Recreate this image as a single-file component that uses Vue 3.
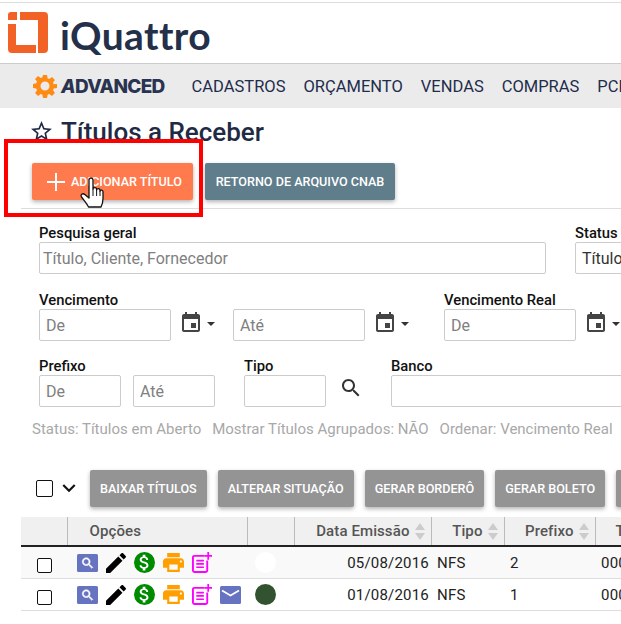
<script setup>
const nav = ["CADASTROS", "ORÇAMENTO", "VENDAS", "COMPRAS", "PCP"]
const rows = [
  { date: "05/08/2016", tipo: "NFS", prefixo: "2", mail: false, color: "#ffffff" },
  { date: "01/08/2016", tipo: "NFS", prefixo: "1", mail: true, color: "#33522f" }
]
const actions = ["Baixar Títulos", "Alterar Situação", "Gerar Borderô", "Gerar Boleto"]
const calendar = "M17 12h-5v5h5v-5zM16 1v2H8V1H6v2H5c-1.11 0-1.99.9-1.99 2L3 19c0 1.1.89 2 2 2h14c1.1 0 2-.9 2-2V5c0-1.1-.9-2-2-2h-1V1h-2zm3 18H5V8h14v11z"
const search = "M15.5 14h-.79l-.28-.27C15.41 12.59 16 11.11 16 9.5 16 5.91 13.09 3 9.5 3S3 5.91 3 9.5 5.91 16 9.5 16c1.61 0 3.09-.59 4.23-1.57l.27.28v.79l5 4.99L20.49 19l-4.99-5zm-6 0C7.01 14 5 11.99 5 9.5S7.01 5 9.5 5 14 7.01 14 9.5 11.99 14 9.5 14z"
</script>

<template>
  <div class="page">
    <header class="top">
      <svg class="mark" width="40" height="41" viewBox="0 0 40 41">
        <path fill="#f26125" d="M3 0h6v8H0V3a3 3 0 0 1 3-3zM12 0h24a4 4 0 0 1 4 4v33a4 4 0 0 1-4 4h-6V8H12zM0 12h8v21h20v8H4a4 4 0 0 1-4-4z" />
      </svg>
      <span class="brand">iQuattro</span>
    </header>

    <nav class="nav">
      <svg class="gear" width="24" height="24" viewBox="0 0 24 24">
        <path fill="#ff8a14" fill-rule="evenodd" d="M10 1h4l.6 3.2 1.7.7L19 3l2.9 2.9-1.9 2.7.7 1.700L24 10v4l-3.300.6-.7 1.700 1.900 2.700L19 21.900l-2.700-1.900-1.700.7L14 24h-4l-.6-3.300-1.700-.7L5 21.900 2.100 19l1.900-2.700-.7-1.700L0 14v-4l3.300-.7.7-1.700L2.100 5 5 2.100l2.700 1.900 1.700-.7zM12 7.500a4.500 4.500 0 1 0 0 9 4.500 4.500 0 0 0 0-9z" />
      </svg>
      <span class="advanced"><em>A</em>DVANCED</span>
      <a v-for="n in nav" :key="n" class="nav-item">{{ n }}</a>
    </nav>

    <h1 class="title">
      <svg width="25" height="25" viewBox="0 0 24 24">
        <path fill="#1f2a44" d="M22 9.240l-7.190-.62L12 2 9.190 8.630 2 9.240l5.460 4.730L5.820 21 12 17.270 18.180 21l-1.630-7.030L22 9.240zM12 15.400l-3.760 2.270 1-4.280-3.320-2.880 4.380-.38L12 6.100l1.710 4.040 4.380.38-3.320 2.880 1 4.280L12 15.400z" />
      </svg>
      Títulos a Receber
    </h1>

    <div class="toolbar">
      <button class="btn orange">
        <svg width="18" height="18" viewBox="0 0 18 18"><path fill="#fff" d="M8 0h2v8h8v2h-8v8H8v-8H0V8h8z" /></svg>
        Adicionar Título
      </button>
      <button class="btn slate">Retorno de Arquivo CNAB</button>
    </div>

    <section class="filters">
      <div class="row row-1">
        <label class="field w507 wide"><span>Pesquisa geral</span><input placeholder="Título, Cliente, Fornecedor"></label>
        <label class="field w200"><span>Status</span><input value="Títulos em Aberto"></label>
      </div>

      <div class="row row-2">
        <label class="field w132"><span>Vencimento</span><input placeholder="De"></label>
        <div class="picker">
          <svg width="24" height="24" viewBox="0 0 24 24"><path fill="#444" :d="calendar" /></svg>
          <i class="caret"></i>
        </div>
        <label class="field w132"><span>&nbsp;</span><input placeholder="Até"></label>
        <div class="picker">
          <svg width="24" height="24" viewBox="0 0 24 24"><path fill="#444" :d="calendar" /></svg>
          <i class="caret"></i>
        </div>
        <label class="field w132 real"><span>Vencimento Real</span><input placeholder="De"></label>
        <div class="picker">
          <svg width="24" height="24" viewBox="0 0 24 24"><path fill="#444" :d="calendar" /></svg>
          <i class="caret"></i>
        </div>
      </div>

      <div class="row row-3">
        <label class="field w82"><span>Prefixo</span><input placeholder="De"></label>
        <label class="field w82 ate"><span>&nbsp;</span><input placeholder="Até"></label>
        <label class="field w82 tipo"><span>Tipo</span><input></label>
        <svg class="lookup" width="24" height="24" viewBox="0 0 24 24"><path fill="#333" :d="search" /></svg>
        <label class="field w300"><span>Banco</span><input></label>
      </div>

      <p class="summary">
        <span>Status: Títulos em Aberto</span>
        <span>Mostrar Títulos Agrupados: NÃO</span>
        <span>Ordenar: Vencimento Real</span>
      </p>
    </section>

    <div class="bulk">
      <i class="check big"></i>
      <svg class="chev" width="26" height="26" viewBox="0 0 24 24"><path fill="#111" d="M16.590 8.590L12 13.170 7.410 8.590 6 10l6 6 6-6z" /></svg>
      <button v-for="a in actions" :key="a" class="btn gray">{{ a }}</button>
      <button class="btn gray more"></button>
    </div>

    <table class="grid">
      <colgroup>
        <col style="width: 46px"><col style="width: 180px"><col style="width: 47px"><col style="width: 137px">
        <col style="width: 73px"><col style="width: 91px"><col style="width: 120px">
      </colgroup>
      <thead>
        <tr>
          <th></th>
          <th class="opt">Opções</th>
          <th></th>
          <th class="sortable">Data Emissão<i class="sort"></i></th>
          <th class="sortable">Tipo<i class="sort"></i></th>
          <th class="sortable">Prefixo<i class="sort"></i></th>
          <th class="last">Título</th>
        </tr>
      </thead>
      <tbody>
        <tr v-for="r in rows" :key="r.date">
          <td class="mid"><i class="check"></i></td>
          <td>
            <div class="tools">
              <svg width="21" height="18" viewBox="0 0 21 18">
                <rect width="21" height="18" rx="1.500" fill="#6573c0" />
                <g transform="translate(3.500 2) scale(.6)"><path fill="#fff" stroke="#fff" stroke-width="1" :d="search" /></g>
              </svg>
              <svg width="20" height="20" viewBox="3 3 18 18"><path fill="#000" d="M3 17.250V21h3.750L17.810 9.940l-3.750-3.750L3 17.250zM20.710 7.040c.39-.39.39-1.020 0-1.410l-2.340-2.340c-.39-.39-1.020-.39-1.410 0l-1.830 1.830 3.750 3.750 1.830-1.830z" /></svg>
              <svg width="21" height="21" viewBox="0 0 24 24">
                <circle cx="12" cy="12" r="12" fill="#008a00" />
                <path fill="#fff" d="M11.800 10.900c-2.270-.59-3-1.200-3-2.150 0-1.090 1.010-1.850 2.700-1.850 1.780 0 2.440.85 2.500 2.100h2.210c-.07-1.720-1.120-3.300-3.210-3.810V3h-3v2.160c-1.940.42-3.500 1.680-3.500 3.610 0 2.310 1.910 3.460 4.700 4.130 2.500.6 3 1.480 3 2.410 0 .69-.49 1.790-2.700 1.790-2.060 0-2.870-.92-2.980-2.100h-2.200c.12 2.190 1.760 3.420 3.680 3.830V21h3v-2.150c1.950-.37 3.500-1.500 3.500-3.550 0-2.840-2.430-3.810-4.700-4.400z" />
              </svg>
              <svg width="21" height="19" viewBox="2 3 20 18"><path fill="#ffa000" d="M19 8H5c-1.660 0-3 1.340-3 3v6h4v4h12v-4h4v-6c0-1.660-1.340-3-3-3zm-3 11H8v-5h8v5zm3-7c-.55 0-1-.45-1-1s.45-1 1-1 1 .45 1 1-.45 1-1 1zm-1-9H6v4h12V3z" /></svg>
              <svg width="20" height="21" viewBox="0 0 21 22">
                <path fill="none" stroke="#f0f" stroke-width="2" d="M13 4H2.500a1.500 1.500 0 0 0-1.500 1.500v14A1.500 1.500 0 0 0 2.500 21h12a1.500 1.500 0 0 0 1.500-1.500V9" />
                <path fill="none" stroke="#f0f" stroke-width="1.800" d="M4.500 9h8M4.500 12.500h8M4.500 16h8M17 0v8M13 4h8" />
              </svg>
              <svg v-if="r.mail" width="21" height="18" viewBox="0 0 21 18">
                <rect width="21" height="18" rx="1.500" fill="#6573c0" />
                <path fill="none" stroke="#fff" stroke-width="1.800" d="M2 4.500l8.500 5 8.500-5" />
              </svg>
            </div>
          </td>
          <td class="mid"><i class="dot" :style="{ background: r.color }"></i></td>
          <td class="date">{{ r.date }}</td>
          <td class="txt">{{ r.tipo }}</td>
          <td class="txt">{{ r.prefixo }}</td>
          <td class="txt">000123</td>
        </tr>
      </tbody>
    </table>

    <div class="highlight"></div>
    <svg class="hand" width="24" height="33" viewBox="0 0 24 33">
      <path fill="#fff" stroke="#111" stroke-width="1.300" stroke-linejoin="round" d="M9 3c0-2.600 4-2.600 4 0v9c0-1.900 3.600-1.900 3.600 0v1c0-1.800 3.400-1.800 3.400.2v1c0-1.500 3-1.300 3 .6v6.700c0 3.500-.6 5.500-2 8.500H8.500C7 27 4 23.500 1.500 20c-1.500-2.300 1.200-4.300 3.300-2.500L9 21z" />
      <path fill="none" stroke="#111" stroke-width="1" d="M13 12v7M16.600 13v6M20 14v5" />
    </svg>
  </div>
</template>

<style scoped>
.page {
  position: relative;
  width: 621px;
  height: 624px;
  overflow: hidden;
  background: #fff;
  font-family: Roboto, "Liberation Sans", sans-serif;
  color: #222;
}

.top {
  height: 51px;
  margin-top: 2px;
  border-top: 1px solid #ddd;
  border-bottom: 1px solid #ccc;
  display: flex;
  align-items: flex-start;
  padding: 9px 0 0 8px;
}

.brand {
  margin-left: 12px;
  margin-top: -2px;
  font-family: Lato, sans-serif;
  font-weight: 700;
  font-size: 39px;
  line-height: 50px;
  letter-spacing: .4px;
  color: #24304a;
}

.nav {
  height: 44px;
  width: 800px;
  background: #ebebeb;
  display: flex;
  align-items: center;
  padding-left: 33px;
}

.gear { flex: none; }

.advanced {
  margin-left: 4px;
  margin-right: 27px;
  font-family: Inter, sans-serif;
  font-weight: 800;
  font-size: 19px;
  letter-spacing: -.7px;
  color: #2a3350;
}

.nav-item {
  margin-right: 18px;
  font-size: 16.5px;
  color: #1f2d4d;
}

.title {
  margin: 0;
  height: 46px;
  padding: 9px 0 0 29px;
  display: flex;
  align-items: flex-start;
  gap: 7px;
  font-size: 26px;
  line-height: 30px;
  font-weight: 500;
  color: #1f2a44;
}

.title svg { margin-top: 2px; }

.toolbar {
  margin-left: 21px;
  padding: 0 0 8px 11px;
  width: 800px;
  display: flex;
  gap: 12px;
  border-bottom: 1px solid #ddd;
}

.btn {
  height: 37px;
  padding: 0 10px;
  border: none;
  border-radius: 2px;
  display: flex;
  align-items: center;
  flex: none;
  color: #fff;
  font-family: Roboto, sans-serif;
  font-weight: 500;
  font-size: 12.6px;
  white-space: nowrap;
  text-transform: uppercase;
  box-shadow: 0 2px 4px rgba(0, 0, 0, .3);
}

.orange {
  width: 161px;
  padding-left: 15px;
  gap: 6px;
  background: #ff7a4d;
}

.slate {
  width: 190px;
  justify-content: center;
  background: #607d8b;
}

.gray {
  justify-content: center;
  padding: 0 10px;
  background: #949494;
}

.more { width: 60px; }

.filters {
  padding: 15px 0 0 39px;
  width: 800px;
}

.row {
  display: flex;
  align-items: flex-start;
}

.row-1 { gap: 29px; height: 67px; }
.row-2 { height: 66px; }
.row-3 { height: 63px; }

.field {
  display: flex;
  flex-direction: column;
  flex: none;
}

.field span {
  height: 18px;
  font-size: 14.8px;
  line-height: 18px;
  font-weight: 500;
  color: #111;
}

.field input {
  width: 100%;
  height: 32px;
  box-sizing: border-box;
  padding: 0 6px;
  border: 1px solid #ccc;
  border-radius: 2px;
  background: #fff;
  font-family: Roboto, sans-serif;
  font-size: 16px;
  color: #333;
  outline: none;
}

.field input::placeholder {
  color: #808080;
  opacity: 1;
}

.field.wide input { padding-left: 3px; }

.w507 { width: 507px; }
.w200 { width: 200px; }
.w132 { width: 132px; }
.w82 { width: 82px; }
.w300 { width: 300px; }
.real { margin-left: 17px; }
.ate { margin-left: 12px; }
.tipo { margin-left: 29px; }

.picker {
  width: 62px;
  height: 24px;
  box-sizing: border-box;
  margin-top: 20px;
  padding-left: 8px;
  display: flex;
  align-items: center;
  gap: 4px;
  flex: none;
}

.caret {
  width: 0;
  height: 0;
  margin-top: 1px;
  border: 4.5px solid transparent;
  border-top-color: #333;
  border-bottom: none;
}

.lookup {
  margin: 19px 28px 0 13px;
  flex: none;
}

.summary {
  margin: 0 0 0 -7px;
  display: flex;
  gap: 11px;
  font-size: 15px;
  line-height: 18px;
  color: #a8a8a8;
}

.bulk {
  margin-top: 32px;
  padding-left: 36px;
  width: 800px;
  height: 47px;
  display: flex;
  align-items: flex-start;
  gap: 11px;
}

.check {
  display: block;
  width: 13px;
  height: 13px;
  border: 1px solid #111;
  border-radius: 2px;
  background: #fff;
  margin: 6px auto 0;
}

.check.big {
  width: 15px;
  height: 15px;
  margin: 10px 0 0;
  flex: none;
}

.chev { margin: 5px -2.500px 0 -8.500px; flex: none; }

.grid {
  margin-left: 21px;
  width: 694px;
  table-layout: fixed;
  border-collapse: collapse;
}

.grid th {
  height: 28px;
  padding: 0;
  background: #f0f0f0;
  border-bottom: 2px solid #222;
  border-right: 1px solid #bbb;
  font-size: 15px;
  font-weight: 500;
  color: #555;
  letter-spacing: .1px;
}

.grid th.sortable {
  text-align: right;
  padding-right: 5px;
}

.grid th.last {
  border-right: none;
  text-align: left;
  padding-left: 20px;
}

.grid th.opt {
  text-align: left;
  padding-left: 22px;
}

.sort {
  display: inline-block;
  position: relative;
  width: 11px;
  height: 15px;
  margin-left: 5px;
  vertical-align: -3px;
}

.sort::before,
.sort::after {
  content: "";
  position: absolute;
  left: 0;
  border: 5.5px solid transparent;
}

.sort::before {
  top: -1px;
  border-top: none;
  border-bottom: 7px solid #ccc;
}

.sort::after {
  bottom: -1px;
  border-bottom: none;
  border-top: 7px solid #ccc;
}

.grid td {
  height: 31px;
  padding: 0;
  border-bottom: 1px solid #ddd;
  font-size: 15px;
  letter-spacing: .2px;
  color: #222;
}

.grid tbody tr:first-child td { background: #f9f9f9; }

.grid td.mid { text-align: center; }

.grid td.date {
  text-align: right;
  padding-right: 2px;
}

.grid td.txt { padding-left: 6px; }

.tools {
  display: flex;
  align-items: center;
  gap: 8px;
  padding-left: 10px;
  height: 31px;
}

.tools svg { flex: none; }

.dot {
  display: block;
  width: 21px;
  height: 21px;
  border-radius: 50%;
  margin-left: 8px;
}

.highlight {
  position: absolute;
  left: 4px;
  top: 139px;
  width: 191px;
  height: 70px;
  border: 4px solid #f00;
}

.hand {
  position: absolute;
  left: 80px;
  top: 177px;
}
</style>
